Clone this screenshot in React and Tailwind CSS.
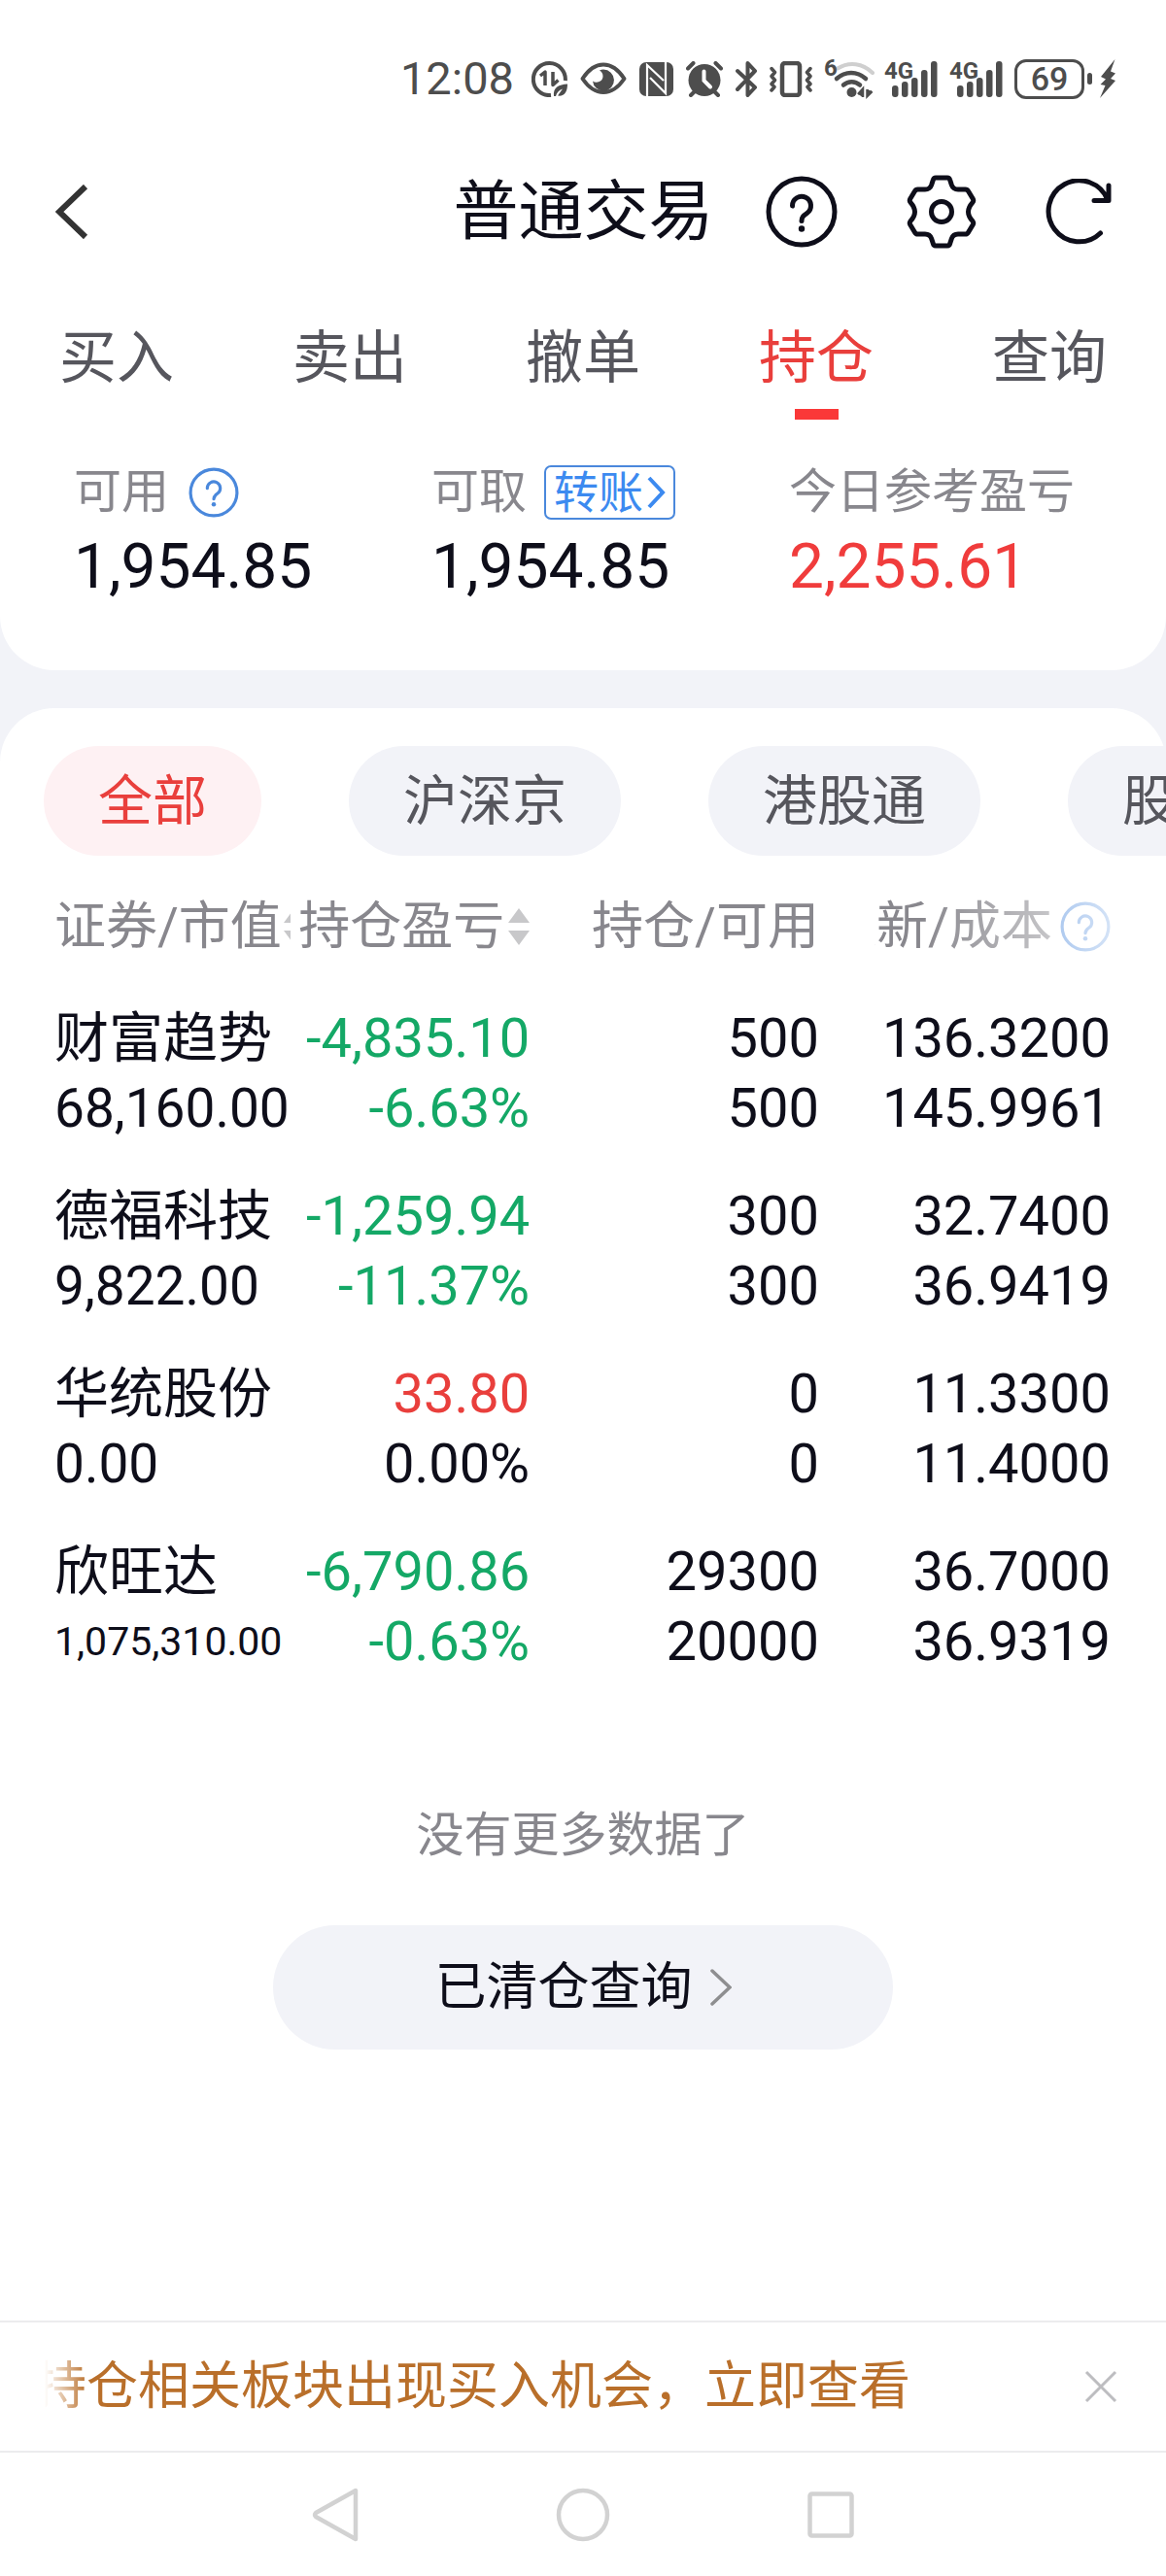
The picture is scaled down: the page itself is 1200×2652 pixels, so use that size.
import React, { useState } from 'react';

const TABS = ['买入', '卖出', '撤单', '持仓', '查询'];
const MARKETS = ['全部', '沪深京', '港股通', '股转'];

const HOLDINGS = [
  {
    name: '财富趋势',
    value: '68,160.00',
    profit: '-4,835.10',
    percent: '-6.63%',
    held: '500',
    usable: '500',
    price: '136.3200',
    cost: '145.9961',
  },
  {
    name: '德福科技',
    value: '9,822.00',
    profit: '-1,259.94',
    percent: '-11.37%',
    held: '300',
    usable: '300',
    price: '32.7400',
    cost: '36.9419',
  },
  {
    name: '华统股份',
    value: '0.00',
    profit: '33.80',
    percent: '0.00%',
    held: '0',
    usable: '0',
    price: '11.3300',
    cost: '11.4000',
  },
  {
    name: '欣旺达',
    value: '1,075,310.00',
    profit: '-6,790.86',
    percent: '-0.63%',
    held: '29300',
    usable: '20000',
    price: '36.7000',
    cost: '36.9319',
  },
];

const trendColor = (text) => {
  const n = parseFloat(text.replace(/,/g, ''));
  if (n < 0) return 'text-[#14a866]';
  if (n > 0) return 'text-[#e93f3c]';
  return '';
};

const HelpIcon = ({ className, strokeWidth = 5 }) => (
  <svg viewBox="0 0 74 74" className={className} fill="none" stroke="currentColor" strokeWidth={strokeWidth} strokeLinecap="round" aria-hidden="true">
    <circle cx="37" cy="37" r="34" />
    <path d="M27.500 31a9.500 9.500 0 1 1 15 7.500c-3.800 2.600-5.500 4-5.500 8" />
    <circle cx="37" cy="54.500" r="3.200" fill="currentColor" stroke="none" />
  </svg>
);

const SortIcon = () => (
  <svg viewBox="0 0 22 38" className="h-[38px] w-[22px] shrink-0 text-[#c8c8ca]" fill="currentColor" aria-hidden="true">
    <path d="M11 0l11 15H0zM11 38L0 23h22z" />
  </svg>
);

const Signal = () => (
  <div className="relative h-[41px] w-[55px]">
    <span className="absolute left-0 top-0 text-[24px] font-bold leading-[24px]">4G</span>
    <svg viewBox="0 0 55 41" className="size-full" fill="currentColor" aria-hidden="true">
      <rect x="8" y="27" width="6.500" height="12" rx="3" />
      <rect x="18" y="23" width="6.500" height="16" rx="3" />
      <rect x="28" y="19" width="6.500" height="20" rx="3" />
      <rect x="38" y="11" width="6.500" height="28" rx="3" />
      <rect x="48" y="2" width="6.500" height="37" rx="3" />
    </svg>
  </div>
);

const StatusBar = () => (
  <div className="flex h-[162px] items-center justify-end pr-[52px] text-[#4d4d4d]">
    <span className="mr-[18px] text-[47px] leading-[56px]">12:08</span>

    {/* data saver */}
    <svg viewBox="0 0 37 37" className="mr-[13px] size-[37px]" fill="none" stroke="currentColor" aria-hidden="true">
      <path d="M20 35A16.500 16.500 0 1 1 34.800 20" strokeWidth="4" />
      <path d="M9 15l5-4v14M22 11v13.500l5.500-5" strokeWidth="3.500" strokeLinejoin="round" />
      <path d="M23 36c-1-9 5-12 14-12.500 0 8-3 13-10 12l5-7c-4 1.500-6 4-7 7.500z" fill="currentColor" stroke="none" />
    </svg>

    {/* eye comfort */}
    <svg viewBox="0 0 48 34" className="mr-[13px] h-[34px] w-[48px]" aria-hidden="true">
      <path d="M2.500 17Q12 2.500 24 2.500T45.500 17Q36 31 24 31T2.500 17z" fill="none" stroke="currentColor" strokeWidth="4" strokeLinejoin="round" />
      <path d="M24 7.500a11 11 0 1 1-11 12c3.500 2.500 10 1 10.500-4.500.3-3-1.500-5.500-3.500-6.500a11 11 0 0 1 4-1z" fill="currentColor" />
    </svg>

    {/* nfc */}
    <svg viewBox="0 0 35 35" className="mr-[13px] size-[35px]" aria-hidden="true">
      <rect width="35" height="35" rx="7" fill="currentColor" />
      <path d="M8 35V3l17 16M27 0v32L11 16" fill="none" stroke="#fff" strokeWidth="2.200" />
    </svg>

    {/* alarm */}
    <svg viewBox="0 0 38 37" className="mr-[13px] h-[37px] w-[38px]" fill="none" stroke="currentColor" strokeWidth="4" strokeLinecap="round" aria-hidden="true">
      <circle cx="19" cy="19.500" r="16.500" fill="currentColor" stroke="none" />
      <path d="M2 7.500L7.500 2M36 7.500L30.500 2M5 35l4-4M33 35l-4-4" />
      <path d="M18.500 10.500v9.500l6.500 6.500" stroke="#fff" strokeWidth="4" />
    </svg>

    {/* bluetooth */}
    <svg viewBox="0 0 22 37" className="mr-[13px] h-[37px] w-[22px]" fill="none" stroke="currentColor" strokeWidth="4" strokeLinecap="round" strokeLinejoin="round" aria-hidden="true">
      <path d="M2 10l18 17-7.500 8V2L20 10 2 29" />
    </svg>

    {/* vibrate */}
    <svg viewBox="0 0 44 37" className="mr-3 h-[37px] w-[44px]" fill="none" stroke="currentColor" strokeLinecap="round" strokeLinejoin="round" aria-hidden="true">
      <rect x="13" y="2" width="18" height="33" rx="3" strokeWidth="4.500" />
      <path d="M2 7.500l3.500 4L2 15.500l3.500 4L2 23.500l3 3-3 3.500M42 7.500l-3.500 4 3.500 4-3.500 4 3.500 4-3 3 3 3.500" strokeWidth="3.500" />
    </svg>

    {/* wifi 6 */}
    <div className="relative mr-[10px] h-[41px] w-[52px]">
      <span className="absolute left-0 top-0 text-[24px] font-bold leading-[18px]">6</span>
      <svg viewBox="0 0 52 41" className="size-full" fill="none" stroke="currentColor" strokeWidth="4" strokeLinecap="round" aria-hidden="true">
        <path d="M14 9.500C26 2 40 4 50 14" stroke="#cfcfcf" />
        <path d="M13 20c9-8 21-8 30 0" strokeWidth="4.500" />
        <path d="M20 26.500c5-4.500 12-4.500 17 0" strokeWidth="4.500" />
        <circle cx="28.500" cy="34" r="5" fill="currentColor" stroke="none" />
        <path d="M35 36l5-5.500V39M44.500 31v7l5-5" strokeWidth="2.500" strokeLinecap="butt" fill="currentColor" />
      </svg>
    </div>

    <div className="mr-3">
      <Signal />
    </div>
    <div className="mr-3">
      <Signal />
    </div>

    {/* battery */}
    <div className="flex h-[41px] w-[72px] items-center justify-center rounded-[12px] border-3 border-current text-[34px] font-medium leading-[34px]">69</div>
    <div className="ml-[3px] h-3 w-[5px] rounded-full bg-current" />
    <svg viewBox="0 0 16 40" className="ml-2 h-10 w-4" fill="currentColor" aria-hidden="true">
      <path d="M15.500 0L1 18l5 2.500L.5 26l5 1L0 40l16-18-5-2 5-5.500-5-2z" />
    </svg>
  </div>
);

const Header = () => (
  <header className="grid h-[112px] grid-cols-[1fr_auto_1fr] items-center pl-[57px] pr-[56px] text-[#0e0e1a]">
    <button type="button" aria-label="返回" className="justify-self-start">
      <svg viewBox="0 0 34 56" className="h-[56px] w-[34px] text-[#333]" fill="none" stroke="currentColor" strokeWidth="6" aria-hidden="true">
        <path d="M31 2L4 28l27 26" />
      </svg>
    </button>
    <h1 className="text-[67px] leading-[80px]">普通交易</h1>
    <div className="flex items-center justify-end gap-[71px]">
      <button type="button" aria-label="帮助">
        <HelpIcon className="size-[74px]" />
      </button>
      <button type="button" aria-label="设置">
        <svg viewBox="0 0 72 76" className="h-[76px] w-[72px]" fill="none" stroke="currentColor" strokeWidth="5" strokeLinejoin="round" aria-hidden="true">
          <path d="M30 3h12q2 0 2.600 2l1.800 5.500q1.600 4.500 6.600 4.500h7.500q2 0 3 1.800l4.800 8q1 1.800-.3 3.500-4.500 5-4.500 9.700t4.500 9.700q1.300 1.700.3 3.500l-4.800 8q-1 1.800-3 1.800H53q-5 0-6.600 4.500L44.600 71q-.6 2-2.600 2H30q-2 0-2.600-2l-1.800-5.500Q24 61 19 61h-7.500q-2 0-3-1.800l-4.800-8q-1-1.800.3-3.500 4.500-5 4.500-9.700T4 28.300q-1.300-1.700-.3-3.500l4.800-8q1-1.800 3-1.800H19q5 0 6.600-4.500L27.400 5q.6-2 2.600-2z" />
          <circle cx="36" cy="38" r="10.500" />
        </svg>
      </button>
      <button type="button" aria-label="刷新">
        <svg viewBox="0 0 68 68" className="size-[68px]" fill="none" stroke="currentColor" strokeWidth="5" strokeLinecap="round" strokeLinejoin="round" aria-hidden="true">
          <path d="M64 22A31.500 31.500 0 1 0 56.500 56M65 7v15.500H50" />
        </svg>
      </button>
    </div>
  </header>
);

const Account = () => (
  <dl className="mt-[47px] grid grid-cols-3 pl-[76px] pr-5 text-[#0e0e1a]">
    <div>
      <dt className="flex h-14 items-center gap-5 text-[49px] leading-[56px] text-[#88878d]">
        可用
        <button type="button" aria-label="可用说明" className="text-[#4a88dc]">
          <HelpIcon className="size-[52px]" strokeWidth={4.5} />
        </button>
      </dt>
      <dd className="mt-[13px] text-[64px] leading-[72px]">1,954.85</dd>
    </div>
    <div>
      <dt className="flex h-14 items-center gap-[18px] text-[49px] leading-[56px] text-[#88878d]">
        可取
        <button type="button" className="flex h-14 items-center gap-[3px] rounded-[7px] border-2 border-[#4a88dc] px-2 text-[46px] leading-[52px] text-[#3c8af0]">
          转账
          <svg viewBox="0 0 20 34" className="h-[34px] w-5" fill="none" stroke="currentColor" strokeWidth="4" aria-hidden="true">
            <path d="M3 2l14 15L3 32" />
          </svg>
        </button>
      </dt>
      <dd className="mt-[13px] text-[64px] leading-[72px]">1,954.85</dd>
    </div>
    <div>
      <dt className="h-14 text-[49px] leading-[56px] text-[#88878d]">今日参考盈亏</dt>
      <dd className="mt-[13px] text-[64px] leading-[72px] text-[#f03c3c]">2,255.61</dd>
    </div>
  </dl>
);

const HoldingsTable = () => (
  <div className="mt-[14px] pl-[56px] pr-[57px]">
    <table className="w-full table-fixed text-[56px] leading-[72px] text-[#0e0e1a]">
      <colgroup>
        <col className="w-[22.4%]" />
        <col className="w-[22.6%]" />
        <col className="w-[27.4%]" />
        <col className="w-[27.6%]" />
      </colgroup>
      <thead>
        <tr className="h-[118px] whitespace-nowrap text-[53px] text-[#88878d]">
          <th className="p-0 font-normal">
            <div className="flex items-center gap-[2px] overflow-hidden">
              <span>证券/市值</span>
              <SortIcon />
            </div>
          </th>
          <th className="p-0 font-normal">
            <div className="flex items-center justify-end gap-1">
              <span>持仓盈亏</span>
              <SortIcon />
            </div>
          </th>
          <th className="p-0 text-right font-normal">持仓/可用</th>
          <th className="p-0 font-normal">
            <div className="ml-auto flex w-[243px] items-center justify-end gap-2 overflow-hidden mask-r-from-[20%] mask-r-to-[125%]">
              <span>最新/成本</span>
              <button type="button" aria-label="成本说明" className="text-[#4a88dc]">
                <HelpIcon className="size-[52px]" strokeWidth={4.5} />
              </button>
            </div>
          </th>
        </tr>
      </thead>
      <tbody>
        {HOLDINGS.map((item) => (
          <tr key={item.name} className="h-[183px] whitespace-nowrap text-right">
            <td className="p-0 text-left">
              <div>{item.name}</div>
              <div className={item.value.length > 9 ? 'text-[41px]' : 'text-[55px]'}>{item.value}</div>
            </td>
            <td className="p-0">
              <div className={trendColor(item.profit)}>{item.profit}</div>
              <div className={trendColor(item.percent)}>{item.percent}</div>
            </td>
            <td className="p-0">
              <div>{item.held}</div>
              <div>{item.usable}</div>
            </td>
            <td className="p-0">
              <div>{item.price}</div>
              <div>{item.cost}</div>
            </td>
          </tr>
        ))}
      </tbody>
    </table>
  </div>
);

const App = () => {
  const [tab, setTab] = useState('持仓');
  const [market, setMarket] = useState('全部');
  const [showTip, setShowTip] = useState(true);

  return (
    <div className="flex min-h-screen flex-col overflow-x-hidden bg-[#f2f3f8] font-[Roboto,'Noto_Sans_CJK_SC',sans-serif]">
      <section className="rounded-b-[56px] bg-white pb-[70px]">
        <StatusBar />
        <Header />
        <nav className="grid grid-cols-5 pt-[59px]">
          {TABS.map((name) => (
            <button
              key={name}
              type="button"
              onClick={() => setTab(name)}
              className={`flex flex-col items-center text-[59px] leading-[72px] ${tab === name ? 'text-[#e93f3c]' : 'text-[#56565d]'}`}
            >
              {name}
              <span className={`mt-4 h-[11px] w-[45px] ${tab === name ? 'bg-[#fa3838]' : ''}`} />
            </button>
          ))}
        </nav>
        <Account />
      </section>

      <main className="mt-[39px] flex flex-1 flex-col rounded-t-[56px] bg-white">
        <div className="flex gap-[90px] overflow-hidden pl-[45px] pt-[39px]">
          {MARKETS.map((name) => (
            <button
              key={name}
              type="button"
              onClick={() => setMarket(name)}
              className={`h-[113px] shrink-0 rounded-full px-14 text-[56px] leading-[72px] ${market === name ? 'bg-[#fef1f3] text-[#e93f3c]' : 'bg-[#f2f3f8] text-[#56565d]'}`}
            >
              {name}
            </button>
          ))}
        </div>

        <HoldingsTable />

        <p className="mt-[117px] text-center text-[49px] leading-[56px] text-[#88878d]">没有更多数据了</p>
        <a href="#cleared" className="mx-auto mb-16 mt-16 flex h-[128px] w-[638px] items-center justify-center gap-[18px] rounded-full bg-[#f2f3f8] text-[53px] leading-[72px] text-[#0e0e1a]">
          已清仓查询
          <svg viewBox="0 0 22 38" className="h-[38px] w-[22px] text-[#8e8e90]" fill="none" stroke="currentColor" strokeWidth="3.500" strokeLinecap="round" aria-hidden="true">
            <path d="M2 2l18 17L2 36" />
          </svg>
        </a>

        {showTip && (
          <div className="mt-auto flex h-[134px] items-center justify-between border-t-2 border-[#ececee] pl-[46px] pr-[50px]">
            <a href="#chance" className="flex overflow-hidden whitespace-nowrap text-[53px] leading-[72px] text-[#b96f2a] mask-l-from-95% mask-l-to-100%">
              <span className="-ml-[10px]">持仓相关板块出现买入机会，立即查看</span>
            </a>
            <button type="button" aria-label="关闭" onClick={() => setShowTip(false)}>
              <svg viewBox="0 0 34 34" className="size-[34px] text-[#bdbdc0]" fill="none" stroke="currentColor" strokeWidth="3" aria-hidden="true">
                <path d="M2 2l30 30M32 2L2 32" />
              </svg>
            </button>
          </div>
        )}
      </main>

      <footer className="flex h-[129px] items-center justify-center gap-[203px] border-t-2 border-[#ececee] bg-white text-[#d2d2d2]">
        <button type="button" aria-label="后退">
          <svg viewBox="0 0 48 56" className="h-14 w-12" fill="none" stroke="currentColor" strokeWidth="4.500" strokeLinejoin="round" aria-hidden="true">
            <path d="M45 3v50L4 30q-2-2 0-4z" />
          </svg>
        </button>
        <button type="button" aria-label="主屏幕">
          <svg viewBox="0 0 56 56" className="size-14" fill="none" stroke="currentColor" strokeWidth="4.500" aria-hidden="true">
            <circle cx="28" cy="28" r="25" />
          </svg>
        </button>
        <button type="button" aria-label="最近任务">
          <svg viewBox="0 0 48 48" className="size-12" fill="none" stroke="currentColor" strokeWidth="4.500" aria-hidden="true">
            <rect x="2.500" y="2.500" width="43" height="43" rx="2" />
          </svg>
        </button>
      </footer>
    </div>
  );
};

export default App;
